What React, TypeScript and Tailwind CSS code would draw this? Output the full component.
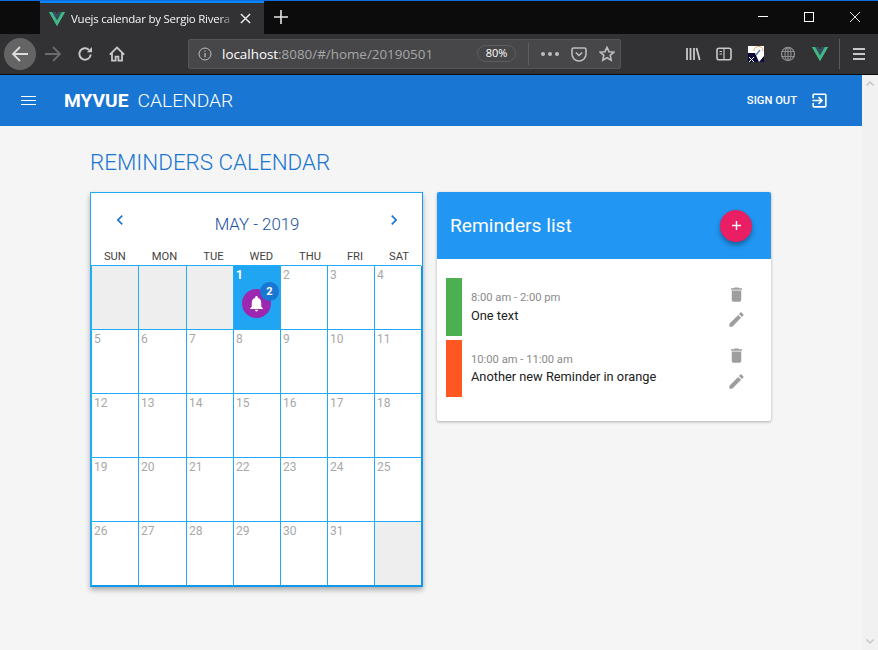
import React from "react";

const P = ({ d, className }: { d: string; className?: string }) => (
  <svg viewBox="0 0 24 24" className={className} fill="currentColor"><path d={d} /></svg>
);
const S = ({ children, className, vb = "0 0 16 16" }: { children: React.ReactNode; className?: string; vb?: string }) => (
  <svg viewBox={vb} className={className} fill="none" stroke="currentColor" strokeWidth="1.6">{children}</svg>
);
const Vue = ({ className }: { className?: string }) => (
  <svg viewBox="0 0 256 221" className={className}>
    <path fill="#41B883" d="M204.8 0H256L128 220.8 0 0h97.92L128 51.2 157.44 0h47.36z" />
    <path fill="#41B883" d="M0 0l128 220.8L256 0h-51.2L128 132.48 50.56 0H0z" />
    <path fill="#35495E" d="M50.56 0L128 133.12 204.8 0h-47.36L128 51.2 97.92 0H50.56z" />
  </svg>
);

const DAYS = ["SUN", "MON", "TUE", "WED", "THU", "FRI", "SAT"];
const cells: (number | null)[] = [null, null, null, ...Array.from({ length: 31 }, (_, i) => i + 1), null];

const BELL = "M12 22c1.1 0 2-.9 2-2h-4c0 1.1.89 2 2 2zm6-6v-5c0-3.07-1.64-5.64-4.5-6.32V4c0-.83-.67-1.5-1.5-1.5s-1.5.67-1.5 1.5v.68C7.63 5.36 6 7.92 6 11v5l-2 2v1h16v-1l-2-2z";
const TRASH = "M6 19c0 1.1.9 2 2 2h8c1.1 0 2-.9 2-2V7H6v12zM19 4h-3.5l-1-1h-5l-1 1H5v2h14V4z";
const EDIT = "M3 17.25V21h3.75L17.81 9.94l-3.75-3.75L3 17.25zM20.71 7.04c.39-.39.39-1.02 0-1.41l-2.34-2.34c-.39-.39-1.02-.39-1.41 0l-1.83 1.83 3.75 3.75 1.83-1.83z";
const EXIT = "M10.09 15.59L11.5 17l5-5-5-5-1.41 1.41L12.67 11H3v2h9.67l-2.58 2.59zM19 3H5c-1.11 0-2 .9-2 2v4h2V5h14v14H5v-4H3v4c0 1.1.89 2 2 2h14c1.1 0 2-.9 2-2V5c0-1.1-.9-2-2-2z";
const LEFT = "M15.41 7.41L14 6l-6 6 6 6 1.41-1.41L10.83 12z";
const RIGHT = "M10 6L8.59 7.41 13.17 12l-4.58 4.59L10 18l6-6z";

function Reminder({ color, time, text, h, pt, gap }: { color: string; time: string; text: string; h: string; pt: string; gap: string }) {
  return (
    <div className={`flex ${h}`}>
      <div className={`w-4 ${color}`} />
      <div className={`ml-[9px] flex-1 ${pt} ${gap}`}>
        <div className="text-[11.2px] leading-[15px] text-[#8a8a8a]">{time}</div>
        <div className="text-[12.8px] leading-[15px] text-[#212121]">{text}</div>
      </div>
    </div>
  );
}

export default function App() {
  return (
    <div className="w-[878px] h-[650px] overflow-hidden flex flex-col bg-[#f5f5f5] font-['Roboto',sans-serif]">
      {/* tab strip */}
      <div className="h-[34px] shrink-0 bg-[#0c0c0c] border-t border-[#0a6fd8] flex text-white">
        <div className="ml-[40px] w-[224px] h-[33px] bg-[#323234] border-t-2 border-[#0a84ff] flex items-center pl-[9px] font-['Open_Sans',sans-serif]">
          <Vue className="w-4 h-[14px] shrink-0" />
          <span className="ml-[6px] w-[164px] overflow-hidden whitespace-nowrap text-[11.5px] tracking-[-0.25px] leading-4 text-[#f6f6f6] [mask-image:linear-gradient(to_right,black_90%,transparent)]">Vuejs calendar by Sergio Rivera</span>
          <svg viewBox="0 0 12 12" className="w-[11px] h-[11px] ml-[5px]" stroke="#f0f0f0" strokeWidth="1.5"><path d="M1 1l10 10M11 1L1 11" /></svg>
        </div>
        <div className="ml-[10px] flex items-center">
          <svg viewBox="0 0 14 14" className="w-[14px] h-[14px] mb-[1px]" stroke="#e6e6e6" strokeWidth="1.6"><path d="M7 0v14M0 7h14" /></svg>
        </div>
        <div className="ml-auto flex items-center pb-[2px]">
          <div className="w-[10px] h-px bg-white mr-[36px]" />
          <div className="w-[10px] h-[10px] border border-white mr-[36px]" />
          <svg viewBox="0 0 10 10" className="w-[10px] h-[10px] mr-[18px]" stroke="#fff" strokeWidth="0.9"><path d="M0 0l10 10M10 0L0 10" /></svg>
        </div>
      </div>
      {/* toolbar */}
      <div className="h-[41px] shrink-0 bg-[#323234] border-b border-[#0c0c0c] flex items-center text-[#c8c8c8] pb-[1px]">
        <div className="ml-1 w-8 h-8 rounded-full bg-[#646465] flex items-center justify-center text-[#dcdcdc]">
          <S className="w-[18px] h-[18px]" vb="0 0 18 18"><path d="M17 9H2M9 2L2 9l7 7" strokeWidth="1.8" /></S>
        </div>
        <S className="w-[18px] h-[18px] ml-[8px] text-[#6b6b6c]" vb="0 0 18 18"><path d="M1 9h15M9 2l7 7-7 7" strokeWidth="1.8" /></S>
        <S className="w-4 h-4 ml-[15px]"><path d="M13.7 8.5a5.7 5.7 0 1 1-1.7-4.6" strokeWidth="2" /><path d="M15 1v5.2h-5.2z" fill="currentColor" stroke="none" /></S>
        <S className="w-4 h-4 ml-[16px]"><path d="M.8 8.7L8 1.6l7.2 7.1M3 7v7.6h3.6v-4h2.8v4H13V7" strokeWidth="1.8" /></S>
        <div className="ml-[63px] w-[433px] h-[30px] rounded-[2px] bg-[#474749] border border-[#555557] flex items-center font-['Open_Sans',sans-serif]">
          <S className="w-[14px] h-[14px] ml-[9px] shrink-0 text-[#bdbdbd]" vb="0 0 14 14"><circle cx="7" cy="7" r="6" strokeWidth="1" /><path d="M7 6v4.2M7 3.4v1.4" strokeWidth="1.2" /></S>
          <div className="ml-[10px] w-[212px] text-[13.4px] leading-5 whitespace-nowrap"><span className="text-white">localhost</span><span className="text-[#a6a6a6]">:8080/#/home/20190501</span></div>
          <div className="ml-[43px] w-[39px] h-[17px] rounded-full border border-[#5e5e60] flex items-center justify-center text-[11px] text-white">80%</div>
          <div className="ml-[12px] w-px h-[22px] bg-[#5e5e60]" />
          <div className="ml-[12px] flex gap-[3px]">
            <i className="block w-1 h-1 rounded-full bg-[#bdbdbd]" /><i className="block w-1 h-1 rounded-full bg-[#bdbdbd]" /><i className="block w-1 h-1 rounded-full bg-[#bdbdbd]" />
          </div>
          <S className="w-4 h-4 ml-[12px] text-[#bdbdbd]"><path d="M1 3.5a1.5 1.5 0 0 1 1.5-1.5h11A1.5 1.5 0 0 1 15 3.5V8a7 7 0 0 1-14 0zM4.8 6.5L8 9.5l3.2-3" /></S>
          <S className="w-4 h-4 ml-[12px] text-[#bdbdbd]"><path d="M8 1.3l2 4.4 4.8.5-3.6 3.2 1 4.7L8 11.7l-4.2 2.4 1-4.7L1.2 6.2 6 5.7z" /></S>
        </div>
        <S className="w-4 h-4 ml-[64px]"><path d="M2 2v12M5.5 2v12M9 2v12M11.5 2l3.2 12" strokeWidth="1.8" /></S>
        <S className="w-4 h-4 ml-[15px]"><rect x="1" y="2.2" width="14" height="11.6" rx="2" /><path d="M8 2.5v11M3.5 5.5h2.5M3.5 8h2.5" strokeWidth="1.2" /></S>
        <svg viewBox="0 0 16 16" className="w-4 h-4 ml-[16px]">
          <rect width="16" height="16" fill="#fff" />
          <path d="M0 7h7l4 9H0z" fill="#0b0b3a" />
          <path d="M11 16l5-6v6z" fill="#0b0b3a" />
          <path d="M6 5a4.5 4.5 0 0 1 9 0" fill="none" stroke="#e8b07a" strokeWidth="1.2" />
          <path d="M8 9l4-5" stroke="#5a7fa8" strokeWidth="1.4" />
          <path d="M1 11l5 5M6 11l-5 5" stroke="#fff" strokeWidth="1" />
        </svg>
        <S className="w-4 h-4 ml-[16px] text-[#8c8c8d]"><circle cx="8" cy="8" r="6.5" strokeWidth="1.3" /><ellipse cx="8" cy="8" rx="3" ry="6.5" strokeWidth="1.2" /><path d="M1.5 5.5h13M1.5 10.5h13M8 1.5v13" strokeWidth="1.2" /></S>
        <Vue className="w-4 h-[14px] ml-[16px]" />
        <div className="w-px h-[30px] bg-[#5a5a5c] ml-[11px]" />
        <div className="ml-[13px] flex flex-col gap-[3px]">
          <i className="block w-3 h-[2px] bg-[#c8c8c8]" /><i className="block w-3 h-[2px] bg-[#c8c8c8]" /><i className="block w-3 h-[2px] bg-[#c8c8c8]" />
        </div>
      </div>
      <div className="flex flex-1 min-h-0">
        <div className="w-[862px] flex flex-col">
          {/* app bar */}
          <div className="h-[51px] shrink-0 bg-[#1976d2] text-white flex items-center">
            <div className="ml-[21px] flex flex-col gap-[3px]">
              <i className="block w-[15px] h-px bg-white" /><i className="block w-[15px] h-px bg-white" /><i className="block w-[15px] h-px bg-white" />
            </div>
            <span className="ml-[28px] text-[19.2px] font-bold leading-6">MYVUE</span>
            <span className="ml-[9px] text-[19.2px] font-light leading-6">CALENDAR</span>
            <span className="ml-auto text-[11.2px] font-medium leading-4">SIGN OUT</span>
            <P d={EXIT} className="w-[19px] h-[19px] ml-[13px] mr-[33px]" />
          </div>
          {/* content */}
          <div className="pl-[90px]">
            <h1 className="mt-[23px] text-[22.4px] leading-[27px] font-light text-[#1976d2]">REMINDERS CALENDAR</h1>
            <div className="mt-[16px] flex items-start gap-[14px]">
              {/* calendar */}
              <div className="w-[333px] border border-[#1fabf5] border-r-[#0d98e8] border-b-[#0d98e8] bg-white shadow-[0_3px_5px_rgba(0,0,0,0.3)]">
                <div className="flex items-start h-[53px] text-[#1976d2]">
                  <P d={LEFT} className="w-5 h-5 ml-[19px] mt-[17px]" />
                  <div className="flex-1 text-center mt-[21px] text-[16.8px] font-light leading-5 text-[#1a4fa0]">MAY - 2019</div>
                  <P d={RIGHT} className="w-5 h-5 mr-[18px] mt-[17px]" />
                </div>
                <div className="flex justify-around h-[19px]">
                  {DAYS.map((d) => (
                    <div key={d} className="text-center text-[11.2px] leading-[20px] text-[#424242] mt-px">{d}</div>
                  ))}
                </div>
                <div className="grid grid-cols-[47px_48px_47px_47px_47px_47px_47px] auto-rows-[64px] border-l border-t border-[#1fabf5] mr-px [&>*:nth-child(7n)]:border-r-[#0d98e8] [&>*:nth-last-child(-n+7)]:border-b-[#0d98e8]">
                  {cells.map((n, i) => (
                    <div
                      key={i}
                      className={`relative border-r border-b border-[#1fabf5] text-[12px] leading-[14px] pl-[2px] pt-[2px] ${n === null ? "bg-[#eeeeee]" : n === 1 ? "bg-[#1fa5f2] text-white font-bold" : "text-[#a8a8a8]"}`}
                    >
                      {n}
                      {n === 1 && (
                        <div className="absolute left-[8px] top-[23px] w-[29px] h-[29px] rounded-full bg-[#9c27b0] flex items-center justify-center text-white">
                          <P d={BELL} className="w-[19px] h-[19px]" />
                          <div className="absolute left-[18px] top-[-7px] w-[19px] h-[19px] rounded-full bg-[#1976d2] flex items-center justify-center text-[11px] leading-none font-bold">2</div>
                        </div>
                      )}
                    </div>
                  ))}
                </div>
              </div>
              {/* reminders */}
              <div className="w-[334px] h-[229px] bg-white rounded-[2px] shadow-[0_1px_3px_rgba(0,0,0,0.3)] overflow-hidden">
                <div className="h-[67px] bg-[#2196f3] flex items-center text-white pl-[13px] pr-[19px]">
                  <span className="text-[19.2px] leading-6 flex-1">Reminders list</span>
                  <div className="w-8 h-8 rounded-full bg-[#e91e63] shadow-[0_3px_5px_rgba(0,0,0,0.35)] flex items-center justify-center">
                    <svg viewBox="0 0 10 10" className="w-[9px] h-[9px]" stroke="#fff" strokeWidth="1.6"><path d="M5 0v10M0 5h10" /></svg>
                  </div>
                </div>
                <div className="relative pl-[9px] pt-[19px]">
                  <Reminder color="bg-[#4caf50]" time="8:00 am - 2:00 pm" text="One text" h="h-[58px]" pt="pt-[12px]" gap="[&>div+div]:mt-[3px]" />
                  <div className="h-1" />
                  <Reminder color="bg-[#ff5722]" time="10:00 am - 11:00 am" text="Another new Reminder in orange" h="h-[57px]" pt="pt-[12px]" gap="[&>div+div]:mt-[2px]" />
                  <div className="absolute left-[290px] top-[26px] flex flex-col text-[#9e9e9e]">
                    <P d={TRASH} className="w-[19px] h-[19px]" />
                    <P d={EDIT} className="w-[19px] h-[19px] mt-[6px]" />
                    <P d={TRASH} className="w-[19px] h-[19px] mt-[17px]" />
                    <P d={EDIT} className="w-[19px] h-[19px] mt-[7px]" />
                  </div>
                </div>
              </div>
            </div>
          </div>
        </div>
        {/* scrollbar */}
        <div className="w-4 bg-[#f1f1f1] flex flex-col items-center justify-between py-[6px] text-[#c4c4c4]">
          <svg viewBox="0 0 8 5" className="w-2 h-[5px]" fill="currentColor"><path d="M4 0l4 4-1 1-3-3-3 3-1-1z" /></svg>
          <svg viewBox="0 0 8 5" className="w-2 h-[5px]" fill="currentColor"><path d="M4 5L0 1l1-1 3 3 3-3 1 1z" /></svg>
        </div>
      </div>
    </div>
  );
}
